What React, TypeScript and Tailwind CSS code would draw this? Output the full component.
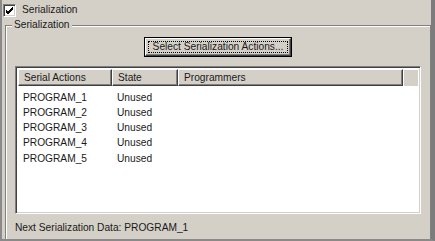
import React from 'react';

const rows = ['PROGRAM_1', 'PROGRAM_2', 'PROGRAM_3', 'PROGRAM_4', 'PROGRAM_5'];

function HeaderCell({ label, width }: { label: string; width: string }) {
  return (
    <div
      className={`${width} h-full shrink-0 border-t border-l border-t-white border-l-white border-r border-b border-r-[#404040] border-b-[#404040] shadow-[inset_-1px_-1px_0_#808080] flex items-center pl-[5px] overflow-hidden whitespace-nowrap`}
    >
      {label}
    </div>
  );
}

export default function App() {
  return (
    <div
      className="relative w-[435px] h-[241px] overflow-hidden bg-[#d4d0c8] text-[10.2px] text-[#1a1a1a] border-l-2 border-l-[#8a8a8a] border-r-[4px] border-r-[#7c7c7c] border-b-2 border-b-[#8a8a8a]"
      style={{ fontFamily: '"Liberation Sans", Arial, sans-serif' }}
    >
      {/* enable checkbox */}
      <div className="flex items-center gap-[6px] pl-[1px] pt-[3px] h-[17px]">
        <div className="w-[13px] h-[13px] bg-white border-t border-l border-t-[#808080] border-l-[#808080] border-r border-b border-r-white border-b-white shadow-[inset_1px_1px_0_#404040,inset_-1px_-1px_0_#d4d0c8] flex items-center justify-center">
          <svg width="9" height="9" viewBox="0 0 9 9">
            <path d="M1 4 L3 6 L8 1 M1 5 L3 7 L8 2 M1 6 L3 8 L8 3" stroke="black" strokeWidth="1" fill="none" />
          </svg>
        </div>
        <span>Serialization</span>
      </div>

      {/* group box */}
      <div className="relative ml-[3px] mt-[8px] w-[426px] h-[220px] border border-[#808080] shadow-[1px_1px_0_white,inset_1px_1px_0_white]">
        <span className="absolute -top-[8px] left-[6px] bg-[#d4d0c8] px-[2px] leading-[14px]">Serialization</span>

        <div className="flex justify-center pt-[11px]">
          <button className="w-[148px] h-[20px] border border-black bg-[#d4d0c8] p-0 whitespace-nowrap">
            <div className="h-full border-t border-l border-t-white border-l-white border-r border-b border-r-[#404040] border-b-[#404040] shadow-[inset_-1px_-1px_0_#808080] flex items-center justify-center p-[2px]">
              <div className="w-full h-full border border-dotted border-black flex items-center justify-center leading-none">
                Select Serialization Actions...
              </div>
            </div>
          </button>
        </div>

        {/* list view */}
        <div className="mx-[9px] mt-[9px] h-[148px] bg-white border-t border-l border-t-[#808080] border-l-[#808080] border-r border-b border-r-white border-b-white shadow-[inset_1px_1px_0_#404040,inset_-1px_-1px_0_#d4d0c8] p-[2px] flex flex-col">
          <div className="flex h-[17px] bg-[#d4d0c8] shrink-0">
            <HeaderCell label="Serial Actions" width="w-[94px]" />
            <HeaderCell label="State" width="w-[66px]" />
            <HeaderCell label="Programmers" width="w-[225px]" />
            <div className="flex-1 border-t border-l border-t-white border-l-white" />
          </div>
          <div className="pt-[4px]">
            {rows.map((r) => (
              <div key={r} className="flex h-[15.25px] items-center leading-none">
                <div className="w-[94px] pl-[5px]">{r}</div>
                <div className="w-[66px] pl-[5px]">Unused</div>
              </div>
            ))}
          </div>
        </div>

        <div className="pl-[9px] mt-[6px]">Next Serialization Data: PROGRAM_1</div>
      </div>
    </div>
  );
}
